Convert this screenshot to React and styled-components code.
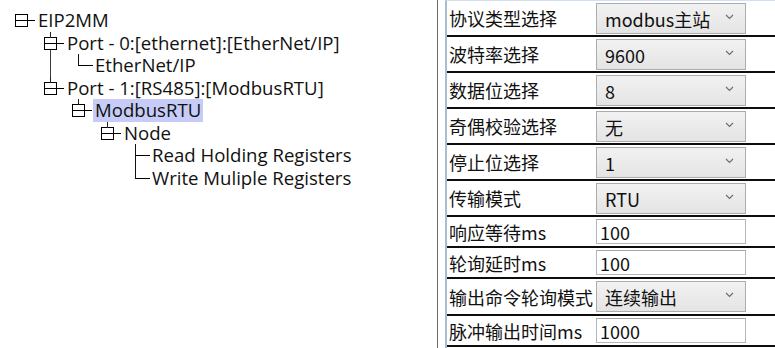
import React from "react";
import styled, { createGlobalStyle } from "styled-components";

const Global = createGlobalStyle`
  html, body { margin: 0; padding: 0; background: #fff; overflow: hidden; }
  #root { height: 100vh; }
  * { box-sizing: border-box; }
`;

const Shell = styled.div`
  display: flex;
  height: 100%;
  background: #fff;
`;

const TreePane = styled.aside`
  width: 438px;
  flex: none;
  border-right: 1px solid #6a6a6a;
  padding-top: 9px;
  font-family: "Open Sans", "Noto Sans", sans-serif;
  font-size: 18.6px;
  color: #111;
`;

const Gap = styled.div`
  width: 7px;
  flex: none;
`;

const TreeRowBox = styled.div`
  display: flex;
  align-items: center;
  height: 22.5px;
  white-space: nowrap;
`;

const Glyph = styled.svg`
  flex: none;
  display: block;
  overflow: visible;
`;

const NodeText = styled.span`
  display: inline-block;
  height: 22.5px;
  line-height: 22.5px;
  padding: 0 2px;
  margin-left: -2px;
  background: ${(p) => (p.$selected ? "#c6ccf7" : "transparent")};
`;

const BASE = 15;
const INDENT = 28.5;
const RH = 22.5;

function TreeRow({ label, level, kind, next, guides = [], selected }) {
  const x0 = Math.round(BASE + INDENT * level);
  const width = x0 + 23;
  const cy = Math.round(RH / 2) + 0.5;
  const cx = x0 + 6.5;
  const lines = [];
  guides.forEach((g) => {
    const gx = Math.round(BASE + INDENT * g) + 6.5;
    lines.push(<line key={"g" + g} x1={gx} y1={0} x2={gx} y2={RH} stroke="#3a3a3a" />);
  });
  if (kind === "branch") {
    const top = cy - 6;
    lines.push(
      <rect key="box" x={x0 + 0.5} y={top} width={12} height={12} fill="#fff" stroke="#000" />
    );
    lines.push(<line key="m" x1={x0 + 1} y1={cy} x2={x0 + 20} y2={cy} stroke="#000" />);
    if (level > 0) lines.push(<line key="st" x1={cx} y1={0} x2={cx} y2={top} stroke="#222" />);
    if (next) lines.push(<line key="sb" x1={cx} y1={top + 12} x2={cx} y2={RH} stroke="#3a3a3a" />);
  } else {
    lines.push(<line key="v" x1={cx} y1={0} x2={cx} y2={next ? RH : cy} stroke="#111" />);
    lines.push(<line key="h" x1={cx} y1={cy} x2={x0 + 21} y2={cy} stroke="#000" strokeWidth="1.4" />);
  }
  return (
    <TreeRowBox>
      <Glyph width={width} height={RH} shapeRendering="crispEdges">
        {lines}
      </Glyph>
      <NodeText $selected={selected}>{label}</NodeText>
    </TreeRowBox>
  );
}

const tree = [
  { label: "EIP2MM", level: 0, kind: "branch" },
  { label: "Port - 0:[ethernet]:[EtherNet/IP]", level: 1, kind: "branch", next: true },
  { label: "EtherNet/IP", level: 2, kind: "leaf", guides: [1] },
  { label: "Port - 1:[RS485]:[ModbusRTU]", level: 1, kind: "branch" },
  { label: "ModbusRTU", level: 2, kind: "branch", selected: true },
  { label: "Node", level: 3, kind: "branch" },
  { label: "Read Holding Registers", level: 4, kind: "leaf", next: true },
  { label: "Write Muliple Registers", level: 4, kind: "leaf" },
];

const PropPane = styled.section`
  flex: 1;
  border-left: 2px solid #a8bcd4;
  border-top: 1px solid #d2e0ef;
  display: flex;
  flex-direction: column;
  font-family: "Noto Sans CJK SC", "Noto Sans", sans-serif;
  font-size: 18px;
  color: #111;
`;

const PropRow = styled.div`
  display: grid;
  grid-template-columns: 149px 150px 1fr;
  height: ${(p) => p.$h}px;
  border-bottom: 2px solid #0d0d0d;
  flex: none;
`;

const Label = styled.div`
  padding-left: 2px;
  align-self: center;
  line-height: 22px;
  white-space: nowrap;
`;

const Select = styled.div`
  margin-top: 2px;
  height: 31px;
  border: 1px solid #acacac;
  background: linear-gradient(#f2f2f2, #e4e4e4);
  display: flex;
  align-items: center;
  justify-content: space-between;
  padding: 0 11px 0 8px;
  line-height: 22px;
  white-space: nowrap;
`;

const Chevron = styled.svg`
  flex: none;
  margin-bottom: 3px;
`;

const Input = styled.div`
  margin-top: 2px;
  height: 25px;
  border: 1px solid #b4b6bc;
  border-top-color: #a3a5ab;
  background: #fff;
  padding-left: 3px;
  display: flex;
  align-items: center;
  line-height: 22px;
`;

const props = [
  { label: "协议类型选择", value: "modbus主站", type: "select" },
  { label: "波特率选择", value: "9600", type: "select" },
  { label: "数据位选择", value: "8", type: "select" },
  { label: "奇偶校验选择", value: "无", type: "select" },
  { label: "停止位选择", value: "1", type: "select" },
  { label: "传输模式", value: "RTU", type: "select" },
  { label: "响应等待ms", value: "100", type: "input" },
  { label: "轮询延时ms", value: "100", type: "input" },
  { label: "输出命令轮询模式", value: "连续输出", type: "select", h: 37 },
  { label: "脉冲输出时间ms", value: "1000", type: "input" },
];

function Field({ type, value }) {
  if (type === "select") {
    return (
      <Select>
        <span>{value}</span>
        <Chevron width="9" height="6" viewBox="0 0 9 6">
          <polyline points="1,1 4.5,4.5 8,1" fill="none" stroke="#6a6a6a" strokeWidth="1.1" />
        </Chevron>
      </Select>
    );
  }
  return <Input>{value}</Input>;
}

export default function App() {
  return (
    <>
      <Global />
      <Shell>
        <TreePane>
          {tree.map((n, i) => (
            <TreeRow key={i} {...n} />
          ))}
        </TreePane>
        <Gap />
        <PropPane>
          {props.map((p, i) => (
            <PropRow key={i} $h={p.h || (p.type === "select" ? 36 : 31)}>
              <Label>{p.label}</Label>
              <Field type={p.type} value={p.value} />
            </PropRow>
          ))}
        </PropPane>
      </Shell>
    </>
  );
}
